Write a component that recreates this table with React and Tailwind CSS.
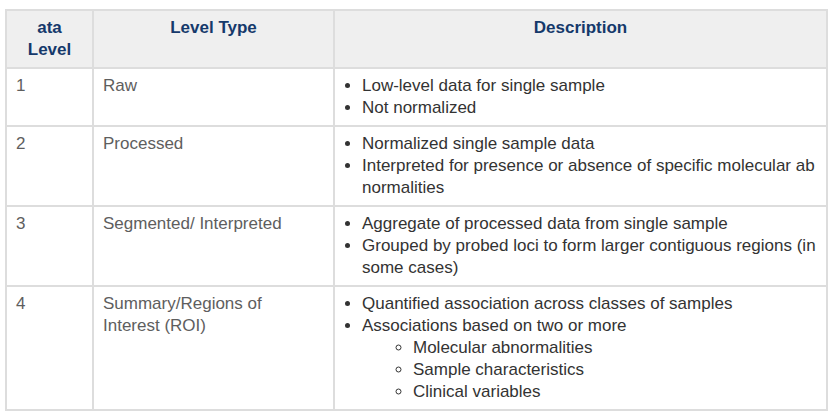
const rows = [
    {
        level: '1',
        type: ['Raw'],
        items: [['Low-level data for single sample'], ['Not normalized']],
    },
    {
        level: '2',
        type: ['Processed'],
        items: [
            ['Normalized single sample data'],
            ['Interpreted for presence or absence of specific molecular ab', 'normalities'],
        ],
    },
    {
        level: '3',
        type: ['Segmented/ Interpreted'],
        items: [
            ['Aggregate of processed data from single sample'],
            ['Grouped by probed loci to form larger contiguous regions (in', 'some cases)'],
        ],
    },
    {
        level: '4',
        type: ['Summary/Regions of', 'Interest (ROI)'],
        items: [
            ['Quantified association across classes of samples'],
            ['Associations based on two or more'],
        ],
        sub: ['Molecular abnormalities', 'Sample characteristics', 'Clinical variables'],
    },
];

const Lines = ({ lines }) => lines.map((l, i) => (
    <span key={i} className="block whitespace-nowrap">{l}</span>
));

const App = () => {
    return (
        <div className="bg-white w-[840px] h-[419px] pt-[9px] pl-[5px] font-['Liberation_Sans',Arial,sans-serif] text-[17px] leading-[22px]">
            <table className="table-fixed border-collapse w-[823px] border-2 border-[#dddddd]">
                <colgroup>
                    <col className="w-[87px]" />
                    <col className="w-[241px]" />
                    <col />
                </colgroup>
                <thead>
                    <tr className="bg-[#efefef] text-[#15396b] font-bold align-top">
                        <th className="border-2 border-[#dddddd] px-2 pt-[6px] pb-[6px] text-center">ata<br />Level</th>
                        <th className="border-2 border-[#dddddd] px-2 pt-[6px] pb-[6px] text-center">Level Type</th>
                        <th className="border-2 border-[#dddddd] px-2 pt-[6px] pb-[6px] text-center">Description</th>
                    </tr>
                </thead>
                <tbody>
                    { rows.map( row => (
                        <tr key={row.level} className="align-top">
                            <td className="border-2 border-[#dddddd] pl-[9px] pr-2 pt-[6px] pb-[6px] text-[#5e5e5e]">{row.level}</td>
                            <td className="border-2 border-[#dddddd] pl-[9px] pr-2 pt-[6px] pb-[6px] text-[#5e5e5e]">
                                <Lines lines={row.type} />
                            </td>
                            <td className="border-2 border-[#dddddd] pl-2 pr-2 pt-[6px] pb-[6px] text-[#333333]">
                                <ul className="list-disc pl-[19px]">
                                    { row.items.map( (it, i) => (
                                        <li key={i}>
                                            <Lines lines={it} />
                                            { row.sub && i === row.items.length - 1 ? (
                                                <ul className="list-[circle] pl-[51px]">
                                                    { row.sub.map( s => <li key={s}>{s}</li> ) }
                                                </ul>
                                            ) : null }
                                        </li>
                                    ))}
                                </ul>
                            </td>
                        </tr>
                    ))}
                </tbody>
            </table>
        </div>
    );
};

export default App;
